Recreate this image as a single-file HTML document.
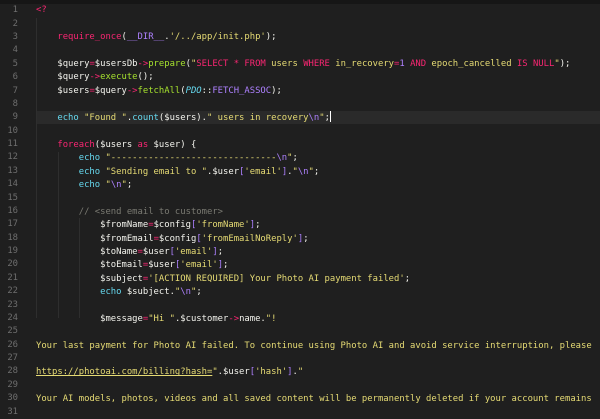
<!DOCTYPE html>
<html><head><meta charset="utf-8">
<style>
html,body{margin:0;padding:0;}
body{width:600px;height:417px;overflow:hidden;background:#1f1f1f;position:relative;font-family:"DejaVu Sans Mono",monospace;}
.top{position:absolute;left:0;top:0;width:600px;height:4px;background:#161616;}
.hl{position:absolute;left:36px;top:111px;width:564px;height:13px;background:#2a2a2a;}
.nums{position:absolute;left:0;top:4.3px;width:18px;text-align:right;font-size:8.9px;line-height:13.37px;color:#6e6e6e;white-space:pre;}
.code{position:absolute;left:36px;top:4.3px;font-size:8.9px;line-height:13.37px;color:#f4f4ee;white-space:pre;}
.guide{position:absolute;width:1px;background:#2e2e2e;}
.k{color:#f92672}.f{color:#a6e22e}.s{color:#e6db74}.e{color:#66d9ef}.p{color:#ae81ff}.c{color:#7a7a72}.i{color:#66d9ef;font-style:italic}
.u{text-decoration:underline;}
.cur{display:inline-block;width:1px;height:11px;background:#fff;vertical-align:-2px;}
</style></head><body>
<div class="top"></div>
<div class="hl"></div>
<div class="guide" style="left:36px;top:18px;height:300px"></div>
<div class="guide" style="left:58px;top:152px;height:166px"></div>
<div class="guide" style="left:79px;top:218px;height:100px"></div>
<div class="nums">1
2
3
4
5
6
7
8
9
10
11
12
13
14
15
16
17
18
19
20
21
22
23
24
25
26
27
28
29
30
31</div>
<div class="code"><span class="k">&lt;?</span>

    <span class="k">require_once</span>(<span class="p">__DIR__</span>.<span class="s">'/../app/init.php'</span>);

    $query<span class="k">=</span>$usersDb<span class="k">-&gt;</span><span class="f">prepare</span>(<span class="s">"</span><span class="k">SELECT * FROM</span><span class="s"> users </span><span class="k">WHERE</span><span class="s"> in_recovery</span><span class="k">=</span><span class="p">1</span> <span class="k">AND</span><span class="s"> epoch_cancelled </span><span class="k">IS NULL</span><span class="s">"</span>);
    $query<span class="k">-&gt;</span><span class="f">execute</span>();
    $users<span class="k">=</span>$query<span class="k">-&gt;</span><span class="f">fetchAll</span>(<span class="i">PDO</span>::<span class="p">FETCH_ASSOC</span>);

    <span class="e">echo</span> <span class="s">"Found "</span>.<span class="e">count</span>($users).<span class="s">" users in recovery</span><span class="p">\n</span><span class="s">"</span>;<span class="cur"></span>

    <span class="k">foreach</span>($users <span class="k">as</span> $user) {
        <span class="e">echo</span> <span class="s">"-------------------------------</span><span class="p">\n</span><span class="s">"</span>;
        <span class="e">echo</span> <span class="s">"Sending email to "</span>.$user<span class="p">[</span><span class="s">'email'</span><span class="p">]</span>.<span class="s">"</span><span class="p">\n</span><span class="s">"</span>;
        <span class="e">echo</span> <span class="s">"</span><span class="p">\n</span><span class="s">"</span>;

        <span class="c">// &lt;send email to customer&gt;</span>
            $fromName<span class="k">=</span>$config<span class="p">[</span><span class="s">'fromName'</span><span class="p">]</span>;
            $fromEmail<span class="k">=</span>$config<span class="p">[</span><span class="s">'fromEmailNoReply'</span><span class="p">]</span>;
            $toName<span class="k">=</span>$user<span class="p">[</span><span class="s">'email'</span><span class="p">]</span>;
            $toEmail<span class="k">=</span>$user<span class="p">[</span><span class="s">'email'</span><span class="p">]</span>;
            $subject<span class="k">=</span><span class="s">'[ACTION REQUIRED] Your Photo AI payment failed'</span>;
            <span class="e">echo</span> $subject.<span class="s">"</span><span class="p">\n</span><span class="s">"</span>;

            $message<span class="k">=</span><span class="s">"Hi "</span>.$customer<span class="k">-&gt;</span>name.<span class="s">"!</span>
<span class="s">
Your last payment for Photo AI failed. To continue using Photo AI and avoid service interruption, please

</span><span class="s u">https://photoai.com/billing?hash=</span><span class="s">"</span>.$user<span class="p">[</span><span class="s">'hash'</span><span class="p">]</span>.<span class="s">"

Your AI models, photos, videos and all saved content will be permanently deleted if your account remains
</span></div>
</body></html>
